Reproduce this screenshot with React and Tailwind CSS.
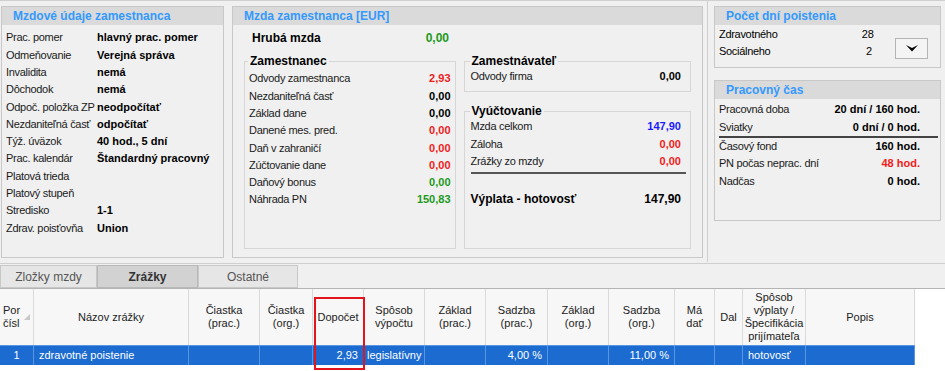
import React from "react";

const employeeInfo = [
  ["Prac. pomer", "hlavný prac. pomer"],
  ["Odmeňovanie", "Verejná správa"],
  ["Invalidita", "nemá"],
  ["Dôchodok", "nemá"],
  ["Odpoč. položka ZP", "neodpočítať"],
  ["Nezdaniteľná časť", "odpočítať"],
  ["Týž. úväzok", "40 hod., 5 dní"],
  ["Prac. kalendár", "Štandardný pracovný"],
  ["Platová trieda", ""],
  ["Platový stupeň", ""],
  ["Stredisko", "1-1"],
  ["Zdrav. poisťovňa", "Union"],
];

const employeeWage = [
  ["Odvody zamestnanca", "2,93", "text-[#f01c1c]"],
  ["Nezdaniteľná časť", "0,00", "text-black"],
  ["Základ dane", "0,00", "text-black"],
  ["Danené mes. pred.", "0,00", "text-[#f01c1c]"],
  ["Daň v zahraničí", "0,00", "text-[#f01c1c]"],
  ["Zúčtovanie dane", "0,00", "text-[#f01c1c]"],
  ["Daňový bonus", "0,00", "text-[#1d9a1d]"],
  ["Náhrada PN", "150,83", "text-[#1d9a1d]"],
];

const columns = [
  ["Por", "čísl"],
  ["Názov zrážky"],
  ["Čiastka", "(prac.)"],
  ["Čiastka", "(org.)"],
  ["Dopočet"],
  ["Spôsob", "výpočtu"],
  ["Základ", "(prac.)"],
  ["Sadzba", "(prac.)"],
  ["Základ", "(org.)"],
  ["Sadzba", "(org.)"],
  ["Má", "dať"],
  ["Dal"],
  ["Spôsob", "výplaty /", "Špecifikácia", "prijímateľa"],
  ["Popis"],
];

const row = [
  ["1", "text-center"],
  ["zdravotné poistenie", "text-left pl-[5px]"],
  ["", ""],
  ["", ""],
  ["2,93", "text-right pr-[5px]"],
  ["legislatívny", "text-left pl-[3px]"],
  ["", ""],
  ["4,00 %", "text-right pr-[5px]"],
  ["", ""],
  ["11,00 %", "text-right pr-[5px]"],
  ["", ""],
  ["", ""],
  ["hotovosť", "text-left pl-[5px]"],
  ["", ""],
];

function Panel({ title, className, children }) {
  return (
    <div className={`flex flex-col border border-[#c8c8c8] bg-[#f0f0f0] ${className}`}>
      <div className="h-[18px] shrink-0 bg-[#dadada] pl-[11px] text-[12px] font-bold leading-[18px] text-[#3399ff]">
        {title}
      </div>
      {children}
    </div>
  );
}

function Group({ title, className, children }) {
  return (
    <fieldset className={`border border-[#d6d6d6] ${className}`}>
      <legend className="ml-[-1px] px-[2px] text-[12px] font-bold leading-[14px] text-black">
        {title}
      </legend>
      {children}
    </fieldset>
  );
}

function ValueRow({ label, value, color = "text-black", className = "" }) {
  return (
    <div className={`flex h-[17.3px] items-center justify-between ${className}`}>
      <span className="tracking-[-0.3px] text-[#1a1a1a]">{label}</span>
      <span className={`font-bold ${color}`}>{value}</span>
    </div>
  );
}

export default function App() {
  return (
    <div className='relative h-[371px] w-[945px] overflow-hidden bg-white font-["Liberation_Sans",Arial,sans-serif] text-[11px] text-black'>
      {/* Top area */}
      <div className="flex h-[263px] border-t border-[#d0d0d0] bg-[#f0f0f0] pt-[5px]">
        {/* Employee data */}
        <Panel title="Mzdové údaje zamestnanca" className="ml-[1px] h-[252px] w-[223px]">
          <div className="pt-[4px] pl-[4px]">
            {employeeInfo.map(([label, value]) => (
              <div key={label} className="flex h-[17.3px] items-center">
                <span className="w-[91px] shrink-0 tracking-[-0.3px] text-[#1a1a1a]">{label}</span>
                <span className="font-bold">{value}</span>
              </div>
            ))}
          </div>
        </Panel>

        {/* Wage */}
        <Panel title="Mzda zamestnanca [EUR]" className="ml-[8px] h-[252px] w-[471px]">
          <div className="ml-[19px] mt-[5px] flex h-[16px] w-[197px] items-center justify-between">
            <span className="text-[12px] font-bold">Hrubá mzda</span>
            <span className="text-[12px] font-bold text-[#1d9a1d]">0,00</span>
          </div>
          <div className="mt-[8px] flex gap-[8px] px-[11px]">
            <Group title="Zamestnanec" className="h-[195px] w-[212px] px-[4px] pt-[2px]">
              {employeeWage.map(([label, value, color]) => (
                <ValueRow key={label} label={label} value={value} color={color} />
              ))}
            </Group>
            <div className="flex w-[228px] flex-col gap-[12px]">
              <Group title="Zamestnávateľ" className="h-[38px] px-[6px] pr-[9px]">
                <ValueRow label="Odvody firma" value="0,00" />
              </Group>
              <Group title="Vyúčtovanie" className="h-[145px] px-[6px] pr-[9px]">
                <ValueRow label="Mzda celkom" value="147,90" color="text-[#1a1aff]" />
                <ValueRow label="Záloha" value="0,00" color="text-[#f01c1c]" />
                <ValueRow label="Zrážky zo mzdy" value="0,00" color="text-[#f01c1c]" />
                <div className="mt-[2px] mr-[-5px] h-[2px] bg-[#555]" />
                <div className="mt-[16px] flex items-center justify-between">
                  <span className="text-[12px] font-bold">Výplata - hotovosť</span>
                  <span className="text-[12px] font-bold">147,90</span>
                </div>
              </Group>
            </div>
          </div>
        </Panel>

        {/* Splitter */}
        <div className="ml-[4px] mt-[-6px] h-[262px] w-[1px] bg-[#cfcfcf]" />

        {/* Right column */}
        <div className="ml-[6px] flex w-[227px] flex-col gap-[12px]">
          <Panel title="Počet dní poistenia" className="h-[62px]">
            <div className="flex pl-[4px] pt-[1px]">
              <div className="w-[155px]">
                <div className="flex h-[17px] items-center justify-between">
                  <span className="tracking-[-0.3px]">Zdravotného</span>
                  <span>28</span>
                </div>
                <div className="flex h-[17px] items-center justify-between">
                  <span className="tracking-[-0.3px]">Sociálneho</span>
                  <span className="pr-[2px]">2</span>
                </div>
              </div>
              <button className="ml-[21px] mt-[12px] flex h-[21px] w-[33px] items-center justify-center border border-[#b4b4b4] bg-[#f4f4f4]">
                <svg width="12" height="7" viewBox="0 0 12 7">
                  <path d="M0 0 L6 3 L12 0 L6 6.5 Z" fill="#000" />
                </svg>
              </button>
            </div>
          </Panel>
          <Panel title="Pracovný čas" className="h-[141px]">
            <div className="pt-[2px] pl-[4px] pr-[20px]">
              <ValueRow label="Pracovná doba" value="20 dní / 160 hod." />
              <ValueRow label="Sviatky" value="0 dní / 0 hod." />
              <div className="mr-[-18px] h-[2px] bg-[#444]" />
              <ValueRow label="Časový fond" value="160 hod." />
              <ValueRow label="PN počas neprac. dní" value="48 hod." color="text-[#f01c1c]" />
              <ValueRow label="Nadčas" value="0 hod." />
            </div>
          </Panel>
        </div>
      </div>

      {/* Tabs */}
      <div className="flex h-[25px] border-t border-[#cfcfcf] bg-[#f0f0f0] pt-[1px]">
        <div className="flex h-[23px] w-[97px] items-center justify-center border border-[#c8c8c8] bg-[#e6e6e6] text-[12px] text-[#555]">
          Zložky mzdy
        </div>
        <div className="flex h-[23px] w-[101px] items-center justify-center border border-[#b8b8b8] bg-[#d2d2d2] text-[12px] font-bold text-[#333]">
          Zrážky
        </div>
        <div className="flex h-[23px] w-[100px] items-center justify-center border border-[#c8c8c8] bg-[#e6e6e6] text-[12px] text-[#555]">
          Ostatné
        </div>
      </div>

      {/* Table */}
      <div className="border-t border-[#b4b4b4]">
        <div className="grid w-[915px] grid-cols-[34px_155px_71px_53px_51px_61px_61px_62px_61px_66px_40px_28px_63px_109px]">
          {columns.map((lines, i) => (
            <div
              key={i}
              className={`flex h-[56px] border-r border-[#dadada] bg-[#f7f7f7] text-[11px] leading-[13px] text-[#222] ${
                i === 0 ? "items-center justify-start gap-[4px] pl-[3px]" : "flex-col items-center justify-center text-center"
              }`}
            >
              {i === 0 ? (
                <>
                  <div>
                    <div>{lines[0]}</div>
                    <div>{lines[1]}</div>
                  </div>
                  <svg width="6" height="6" viewBox="0 0 6 6">
                    <path d="M6 0 L6 6 L0 6 Z" fill="#c8c8c8" />
                  </svg>
                </>
              ) : (
                lines.map((l) => <div key={l}>{l}</div>)
              )}
            </div>
          ))}
          {row.map(([text, align], i) => (
            <div
              key={`r${i}`}
              className={`h-[20px] border-t border-r border-[#5a95e0] bg-[#1b6bd0] text-[11px] leading-[19px] text-white ${align}`}
            >
              {text}
            </div>
          ))}
        </div>
      </div>

      {/* Highlight box */}
      <div className="absolute left-[314px] top-[297px] h-[73px] w-[51px] border-2 border-[#e3141b]" />
    </div>
  );
}
